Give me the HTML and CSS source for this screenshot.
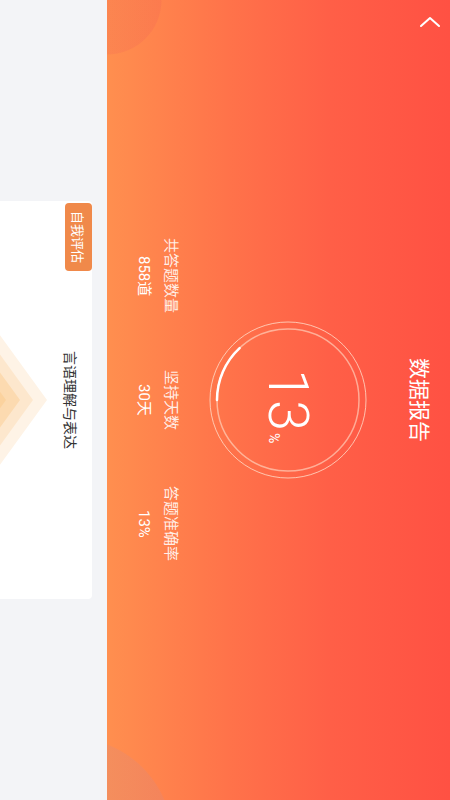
FILE: index.html
```html
<!DOCTYPE html>
<html lang="zh-CN">
<head>
    <meta charset="UTF-8">
    <title>数据报告</title>
    <link rel="stylesheet" href="styles.css">
</head>
<body>

<!-- the app is shown in landscape, turned a quarter to the right:
     sideways writing mode lays it out top-to-bottom -->
<div class="stage">

    <!-- Report header -->
    <div class="report">
        <div class="topbar">
            <a class="back">
                <svg width="20" height="12" viewBox="0 0 20 12">
                    <path d="M19 10 L10 2 L1 10" fill="none" stroke="#fff" stroke-width="2" stroke-linecap="round" stroke-linejoin="round"/>
                </svg>
            </a>
            <h1 class="title">数据报告</h1>
            <span></span>
        </div>

        <div class="ring">
            <svg class="ring-svg" width="160" height="160" viewBox="0 0 160 160">
                <g transform="rotate(90 80 80)">
                    <circle cx="80" cy="80" r="78" fill="none" stroke="rgba(255,228,210,0.75)" stroke-width="1"/>
                    <circle cx="80" cy="80" r="71" fill="none" stroke="rgba(255,225,205,0.6)" stroke-width="1.5"/>
                    <path d="M80 151 A71 71 0 0 1 28.1 128.4" fill="none" stroke="#fff" stroke-width="2.5" stroke-linecap="round"/>
                </g>
            </svg>
            <div class="rate"><span class="rate-num">13</span><span class="rate-unit">%</span></div>
        </div>

        <div class="stats">
            <div class="stat">
                <div class="stat-label">共答题数量</div>
                <div class="stat-value">858道</div>
            </div>
            <div class="stat">
                <div class="stat-label">坚持天数</div>
                <div class="stat-value">30天</div>
            </div>
            <div class="stat">
                <div class="stat-label">答题准确率</div>
                <div class="stat-value">13%</div>
            </div>
        </div>
    </div>

    <!-- Self assessment -->
    <div class="content">
        <div class="card">
            <span class="tag">自我评估</span>
            <div class="dim-name">言语理解与表达</div>
            <svg class="radar" width="47" height="200" viewBox="0 0 47 200">
                <g transform="translate(47 0) rotate(90)">
                    <polygon points="100,0 176.1,55.3 147,144.7 53,144.7 23.9,55.3" fill="#fef3e6"/>
                    <polygon points="100,14 162.8,59.6 138.8,133.4 61.2,133.4 37.2,59.6" fill="#fde7cd"/>
                    <polygon points="100,27 150.4,63.6 131.2,123 68.8,123 49.6,63.6" fill="#fcdab0"/>
                    <polygon points="100,41 137.1,67.9 122.9,111.6 77.1,111.6 62.9,67.9" fill="#fbd29e"/>
                </g>
            </svg>
        </div>
    </div>

</div>

</body>
</html>
```

FILE: styles.css
```css
html, body {
    margin: 0;
    padding: 0;
}

body {
    width: 450px;
    height: 800px;
    overflow: hidden;
    background-color: #f3f4f7;
    font-family: "Noto Sans CJK SC", "Noto Sans", sans-serif;
}

.stage {
    width: 450px;
    height: 800px;
    writing-mode: vertical-rl;
    text-orientation: sideways;
    display: flex;
    flex-direction: column;
    background-color: #f3f4f7;
}

/* Report header */
.report {
    block-size: 343px;
    flex-shrink: 0;
    color: white;
    background:
        radial-gradient(circle 55px at 0 0, rgba(230, 70, 90, 0.13) 98%, transparent 100%),
        radial-gradient(circle 103px at -37px 840px, rgba(200, 140, 150, 0.2) 99%, transparent 100%),
        linear-gradient(to left, #ff5143 0%, #ff5f47 35%, #ff734a 65%, #ff8f4f 100%);
}

.topbar {
    block-size: 58px;
    display: grid;
    grid-template-columns: 48px 1fr 48px;
    align-items: center;
}

.back {
    align-self: start;
    display: flex;
    padding-block-start: 10px;
    padding-inline-start: 16px;
}

.title {
    margin: 0;
    text-align: center;
    font-size: 21px;
    font-weight: normal;
    line-height: 28px;
}

.ring {
    inline-size: 160px;
    block-size: 160px;
    margin-block-start: 24px;
    margin-inline: auto;
    display: grid;
    place-items: center;
}

.ring > * {
    grid-area: 1 / 1;
}

.rate {
    display: flex;
    align-items: baseline;
    padding-inline-start: 12px;
    font-family: Roboto, "Noto Sans", sans-serif;
}

.rate-num {
    font-size: 56px;
    font-weight: 300;
    line-height: 60px;
}

.rate-unit {
    font-size: 14px;
    margin-inline-start: 2px;
}

.stats {
    inline-size: 372px;
    margin-block-start: 26px;
    margin-inline: auto;
    display: grid;
    grid-template-columns: repeat(3, 1fr);
    text-align: center;
}

.stat-label {
    font-size: 15px;
    line-height: 20px;
    color: rgba(255, 255, 255, 0.88);
}

.stat-value {
    margin-block-start: 8px;
    font-family: Roboto, "Noto Sans CJK SC", sans-serif;
    font-size: 15px;
    line-height: 20px;
}

/* Self assessment card */
.content {
    flex: 1;
    min-block-size: 0;
    padding-block-start: 15px;
    display: flex;
    flex-direction: column;
}

.card {
    position: relative;
    flex: 1;
    inline-size: 398px;
    margin-inline: auto;
    background-color: #fff;
    border-start-start-radius: 4px;
    border-start-end-radius: 4px;
    overflow: hidden;
}

.tag {
    position: absolute;
    inset-block-start: 0;
    inset-inline-start: 2px;
    padding-inline: 8px;
    block-size: 27px;
    line-height: 27px;
    font-size: 13px;
    color: #fff;
    background-color: #f0894a;
    border-radius: 4px;
}

.dim-name {
    padding-block-start: 11px;
    text-align: center;
    font-size: 14px;
    line-height: 20px;
    color: #333;
}

.radar {
    display: block;
    margin-block-start: 14px;
    margin-inline: auto;
}
```
